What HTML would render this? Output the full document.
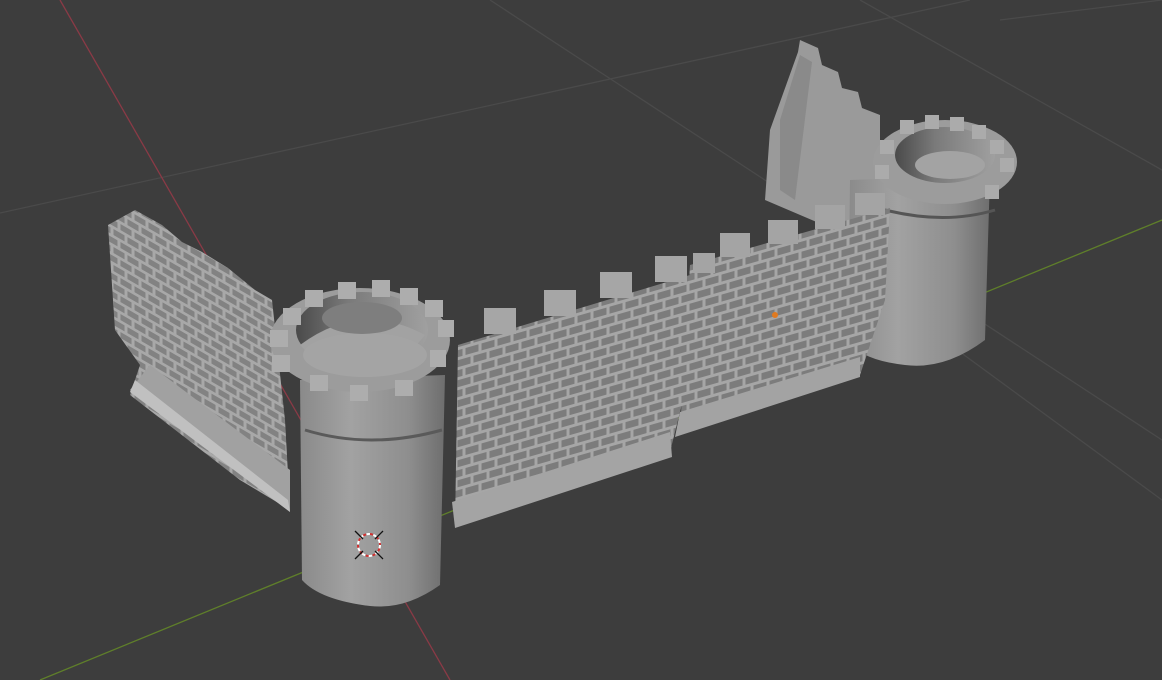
<!DOCTYPE html>
<html><head><meta charset="utf-8"><style>
html,body{margin:0;padding:0;background:#3d3d3d;width:1162px;height:680px;overflow:hidden}
svg{display:block}
</style></head><body>
<svg width="1162" height="680" viewBox="0 0 1162 680" xmlns="http://www.w3.org/2000/svg">
<defs>
<pattern id="brick" width="32" height="20" patternUnits="userSpaceOnUse" patternTransform="skewY(-16)">
<rect width="32" height="20" fill="#a6a6a6"/>
<rect x="1.5" y="1.5" width="13" height="7" fill="#7c7c7c"/><rect x="17.5" y="1.5" width="13" height="7" fill="#7c7c7c"/>
<rect x="-6.5" y="11.5" width="13" height="7" fill="#7c7c7c"/><rect x="9.5" y="11.5" width="13" height="7" fill="#7c7c7c"/><rect x="25.5" y="11.5" width="13" height="7" fill="#7c7c7c"/>
</pattern>
<pattern id="brick2" width="28" height="18" patternUnits="userSpaceOnUse" patternTransform="skewY(30)">
<rect width="28" height="18" fill="#a8a8a8"/>
<rect x="1.5" y="1.5" width="11" height="6" fill="#828282"/><rect x="15.5" y="1.5" width="11" height="6" fill="#828282"/>
<rect x="-5.5" y="10.5" width="11" height="6" fill="#828282"/><rect x="8.5" y="10.5" width="11" height="6" fill="#828282"/><rect x="22.5" y="10.5" width="11" height="6" fill="#828282"/>
</pattern>
<linearGradient id="cyl" x1="0" x2="1">
<stop offset="0" stop-color="#8a8a8a"/><stop offset="0.35" stop-color="#a2a2a2"/><stop offset="0.75" stop-color="#8e8e8e"/><stop offset="1" stop-color="#6e6e6e"/>
</linearGradient>
<linearGradient id="hole" x1="0" x2="1">
<stop offset="0" stop-color="#4a4a4a"/><stop offset="0.4" stop-color="#7a7a7a"/><stop offset="1" stop-color="#a0a0a0"/>
</linearGradient>
</defs>
<g stroke="#4a4a4a" stroke-width="1.3" fill="none">
<line x1="0" y1="213" x2="970" y2="0"/>
<line x1="490" y1="0" x2="1162" y2="440"/>
<line x1="860" y1="0" x2="1162" y2="170"/>
<line x1="930" y1="330" x2="1162" y2="500"/>
<line x1="1000" y1="20" x2="1162" y2="0"/>
</g>
<line x1="60" y1="0" x2="450" y2="680" stroke="#8a3a46" stroke-width="1.3"/>
<line x1="40" y1="680" x2="1162" y2="220" stroke="#5f7f2a" stroke-width="1.3"/>

<!-- back right wall -->
<polygon points="765,200 770,130 798,52 800,40 818,48 822,65 838,72 842,88 858,92 862,108 880,115 880,200 840,232" fill="#9a9a9a"/>
<polygon points="780,120 800,55 812,62 795,200 780,190" fill="#8a8a8a"/>
<!-- right tower -->
<path d="M850,180 L990,175 L985,340 Q945,370 905,365 Q860,360 848,340 Z" fill="url(#cyl)"/>
<ellipse cx="945" cy="162" rx="72" ry="42" fill="#9c9c9c"/>
<ellipse cx="945" cy="155" rx="50" ry="28" fill="url(#hole)"/>
<ellipse cx="950" cy="165" rx="35" ry="14" fill="#a3a3a3"/>
<g fill="#ababab"><rect x="900" y="120" width="14" height="14"/><rect x="925" y="115" width="14" height="14"/><rect x="950" y="117" width="14" height="14"/><rect x="972" y="125" width="14" height="14"/><rect x="990" y="140" width="14" height="14"/><rect x="1000" y="158" width="14" height="14"/><rect x="880" y="140" width="14" height="14"/><rect x="875" y="165" width="14" height="14"/><rect x="985" y="185" width="14" height="14"/></g>
<path d="M885,210 Q945,225 995,210" stroke="#555" stroke-width="3" fill="none"/>

<!-- middle wall 2 -->
<polygon points="690,265 890,208 885,300 860,375 680,430" fill="url(#brick)"/>
<polygon points="680,412 860,357 860,377 675,437" fill="#a3a3a3"/>
<g fill="#a4a4a4"><rect x="720" y="233" width="30" height="24"/><rect x="768" y="220" width="30" height="24"/><rect x="815" y="205" width="30" height="24"/><rect x="855" y="193" width="30" height="22"/><rect x="693" y="253" width="22" height="20"/></g>
<!-- middle wall 1 -->
<polygon points="458,345 690,275 688,380 670,452 455,525" fill="url(#brick)"/>
<polygon points="452,502 670,432 672,457 455,528" fill="#a4a4a4"/>
<g fill="#a6a6a6"><rect x="484" y="308" width="32" height="26"/><rect x="544" y="290" width="32" height="26"/><rect x="600" y="272" width="32" height="26"/><rect x="655" y="256" width="32" height="26"/></g>
<circle cx="775" cy="315" r="3" fill="#e07a20"/>

<!-- left wall -->
<polygon points="108,225 135,210 162,225 182,242 202,252 228,268 255,290 272,300 285,420 290,510 240,480 130,395 140,365 115,330" fill="url(#brick2)"/>
<polygon points="130,390 150,365 290,470 290,512" fill="#a1a1a1"/>
<polygon points="130,392 290,512 288,500 135,380" fill="#c0c0c0"/>

<!-- left tower -->
<path d="M300,380 L445,375 L440,585 Q405,610 370,606 Q320,600 302,580 Z" fill="url(#cyl)"/>
<path d="M305,430 Q370,450 442,430" stroke="#5a5a5a" stroke-width="3" fill="none"/>
<ellipse cx="360" cy="340" rx="90" ry="52" fill="#9c9c9c"/>
<ellipse cx="362" cy="330" rx="66" ry="38" fill="url(#hole)"/>
<path d="M300,345 Q360,300 425,335 Q400,368 360,372 Q320,368 300,345 Z" fill="#a2a2a2"/>
<ellipse cx="365" cy="355" rx="62" ry="22" fill="#a4a4a4"/>
<ellipse cx="362" cy="318" rx="40" ry="16" fill="#7e7e7e"/>
<g fill="#adadad"><rect x="305" y="290" width="18" height="17"/><rect x="338" y="282" width="18" height="17"/><rect x="372" y="280" width="18" height="17"/><rect x="400" y="288" width="18" height="17"/><rect x="425" y="300" width="18" height="17"/><rect x="438" y="320" width="16" height="17"/><rect x="283" y="308" width="18" height="17"/><rect x="270" y="330" width="18" height="17"/><rect x="272" y="355" width="18" height="17"/><rect x="430" y="350" width="16" height="17"/><rect x="395" y="380" width="18" height="16"/><rect x="350" y="385" width="18" height="16"/><rect x="310" y="375" width="18" height="16"/></g>
<circle cx="369" cy="545" r="11" fill="none" stroke="#fff" stroke-width="2" stroke-dasharray="4 3"/>
<circle cx="369" cy="545" r="11" fill="none" stroke="#d03030" stroke-width="2" stroke-dasharray="3 4" stroke-dashoffset="3.5"/>
<path d="M355,531 L363,539 M383,531 L375,539 M355,559 L363,551 M383,559 L375,551" stroke="#111" stroke-width="1.3"/>
</svg>
</body></html>
